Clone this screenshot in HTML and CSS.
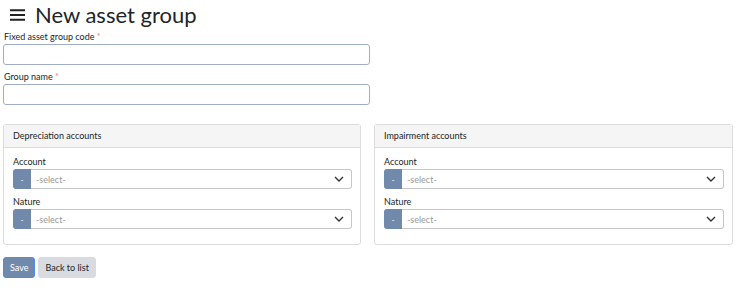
FILE: index.html
```html
<!DOCTYPE html>
<html lang="en">
<head>
  <meta charset="UTF-8" />
  <title>New asset group</title>
  <link rel="stylesheet" href="styles.css">
</head>
<body>
  <div class="page">
    <div class="page-title">
      <span class="menu-icon">
        <svg width="15" height="12" viewBox="0 0 15 12"><path d="M0 1.2h15M0 6h15M0 10.8h15" stroke="#222" stroke-width="2"/></svg>
      </span>
      <h1>New asset group</h1>
    </div>

    <div class="field">
      <label class="field-label">Fixed asset group code <span class="req">*</span></label>
      <input type="text" class="text-input" />
    </div>
    <div class="field">
      <label class="field-label">Group name <span class="req">*</span></label>
      <input type="text" class="text-input" />
    </div>

    <div class="panels">
      <div class="panel">
        <div class="panel-head">Depreciation accounts</div>
        <div class="panel-body">
          <label class="field-label">Account</label>
          <div class="select-row">
            <button class="select-btn">-</button>
            <div class="select-box"><span>-select-</span><svg width="10" height="6" viewBox="0 0 10 6"><path d="M1 1l4 4 4-4" fill="none" stroke="#333" stroke-width="1.4"/></svg></div>
          </div>
          <label class="field-label">Nature</label>
          <div class="select-row">
            <button class="select-btn">-</button>
            <div class="select-box"><span>-select-</span><svg width="10" height="6" viewBox="0 0 10 6"><path d="M1 1l4 4 4-4" fill="none" stroke="#333" stroke-width="1.4"/></svg></div>
          </div>
        </div>
      </div>
      <div class="panel">
        <div class="panel-head">Impairment accounts</div>
        <div class="panel-body">
          <label class="field-label">Account</label>
          <div class="select-row">
            <button class="select-btn">-</button>
            <div class="select-box"><span>-select-</span><svg width="10" height="6" viewBox="0 0 10 6"><path d="M1 1l4 4 4-4" fill="none" stroke="#333" stroke-width="1.4"/></svg></div>
          </div>
          <label class="field-label">Nature</label>
          <div class="select-row">
            <button class="select-btn">-</button>
            <div class="select-box"><span>-select-</span><svg width="10" height="6" viewBox="0 0 10 6"><path d="M1 1l4 4 4-4" fill="none" stroke="#333" stroke-width="1.4"/></svg></div>
          </div>
        </div>
      </div>
    </div>

    <div class="actions">
      <button class="btn btn-save">Save</button>
      <button class="btn btn-back">Back to list</button>
    </div>
  </div>
</body>
</html>
```

FILE: styles.css
```css
body {
  margin: 0;
  background-color: white;
  color: #212529;
  font-family: Lato, "Noto Sans", sans-serif;
}

.page {
  padding: 0 2px 0 3px;
}

.page-title {
  display: flex;
  align-items: center;
  height: 30px;
}

.menu-icon {
  display: flex;
  margin-left: 7px;
  margin-right: 10px;
}

.page-title h1 {
  margin: 0;
  font-size: 22px;
  font-weight: 400;
  line-height: 30px;
}

.field {
  display: flex;
  flex-direction: column;
  margin-bottom: 5px;
}

.field-label {
  font-size: 9px;
  line-height: 14px;
  margin-left: 1px;
}

.req {
  color: #f08080;
}

.text-input {
  width: 367px;
  height: 21px;
  box-sizing: border-box;
  border: 1px solid #9fadc7;
  border-radius: 3px;
  margin: 0;
}

.panels {
  display: grid;
  grid-template-columns: 358px 359px;
  gap: 13px;
  margin-top: 19px;
}

.panel {
  border: 1px solid #dcdcdc;
  border-radius: 3px;
}

.panel-head {
  background-color: #f5f5f5;
  border-bottom: 1px solid #dcdcdc;
  font-size: 9px;
  height: 22px;
  line-height: 22px;
  padding-left: 9px;
}

.panel-body {
  display: flex;
  flex-direction: column;
  padding: 7px 8px 15px 9px;
}

.panel-body .field-label {
  margin-left: 0;
}

.select-row {
  display: flex;
  height: 20px;
  margin-bottom: 6px;
}

.select-row:last-child {
  margin-bottom: 0;
}

.select-btn {
  width: 18px;
  padding: 0;
  border: none;
  border-radius: 3px 0 0 3px;
  background-color: #7189ab;
  color: white;
  font-size: 8px;
}

.select-box {
  flex: 1;
  display: flex;
  align-items: center;
  justify-content: space-between;
  border: 1px solid #c6c6c6;
  border-left: none;
  border-radius: 0 3px 3px 0;
  padding: 0 7px 0 5px;
  font-size: 9px;
  color: #999;
}

.actions {
  display: flex;
  gap: 3px;
  margin-top: 12px;
}

.btn {
  height: 21px;
  border-radius: 3px;
  font-family: inherit;
  font-size: 9px;
  padding: 0 6px;
  cursor: pointer;
}

.btn-save {
  background-color: #7189ab;
  border: 1px solid #4a8ee6;
  color: white;
}

.btn-back {
  background-color: #d8dbdf;
  border: 1px solid #d8dbdf;
  color: #212529;
}
```
